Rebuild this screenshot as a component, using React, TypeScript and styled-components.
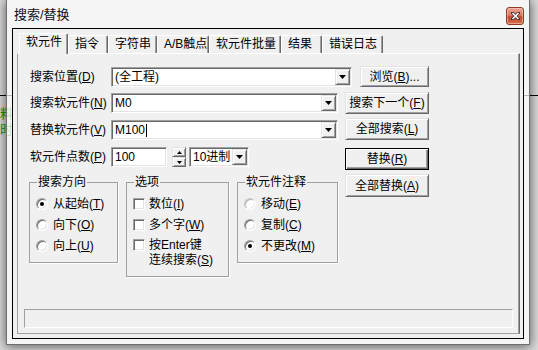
import React from "react";
import styled, { createGlobalStyle, css } from "styled-components";

const GlobalStyle = createGlobalStyle`
  html, body { margin: 0; padding: 0; }
  body {
    width: 538px; height: 350px; overflow: hidden;
    font-family: "Liberation Sans", "Noto Sans CJK SC", sans-serif;
    font-size: 12px; color: #000;
  }
`;

const Desktop = styled.div`
  position: relative;
  width: 538px;
  height: 350px;
  overflow: hidden;
  background: #dcdcdc;
`;

const BgRule = styled.div`
  position: absolute;
  left: 0; right: 0; top: 95px;
  height: 1px;
  background: #000;
`;

const BgGlyph = styled.div<{ $top: number }>`
  position: absolute;
  left: 0;
  top: ${(p) => p.$top}px;
  color: #0a9a0a;
  font-size: 13px;
  line-height: 15px;
`;

const Window = styled.div`
  position: absolute;
  left: 6px; top: 0;
  width: 524px; height: 345px;
  box-sizing: border-box;
  border: 1px solid #6e6e6e;
  border-top: none;
  background: rgba(255, 255, 255, 0.72);
  box-shadow: 0 1px 10px 1px rgba(0, 0, 0, 0.55);
  padding: 0 5px 5px;
  display: flex;
  flex-direction: column;
`;

const TitleBar = styled.div`
  height: 28px;
  flex: none;
  display: flex;
  align-items: flex-start;
`;

const Title = styled.div`
  padding: 8px 0 0 2px;
  font-size: 13px;
  line-height: 14px;
  color: #101018;
`;

const CloseButton = styled.div`
  margin-left: auto;
  margin-top: 7px;
  width: 18px;
  height: 18px;
  box-sizing: border-box;
  border: 1px solid #8e3a2a;
  border-radius: 3px;
  background: linear-gradient(#eba596 0%, #dc7a63 45%, #c5452c 55%, #d4704f 100%);
  box-shadow: inset 0 0 0 1px rgba(255, 210, 200, 0.5);
  display: flex;
  align-items: center;
  justify-content: center;
`;

const Client = styled.div`
  flex: 1;
  box-sizing: border-box;
  border: 1px solid #000;
  background: #f0f0f0;
  padding: 4px 3px 4px 4px;
  display: flex;
  flex-direction: column;
`;

const TabStrip = styled.div`
  height: 20px;
  flex: none;
  display: flex;
  align-items: flex-end;
  padding-left: 2px;
  position: relative;
  z-index: 1;
`;

const Tab = styled.div<{ $w: number; $active?: boolean }>`
  width: ${(p) => p.$w}px;
  height: ${(p) => (p.$active ? 21 : 18)}px;
  margin-bottom: ${(p) => (p.$active ? -1 : 0)}px;
  box-sizing: border-box;
  border: 1px solid;
  border-bottom: none;
  border-color: #fff #696969 transparent #fff;
  border-radius: 2px 2px 0 0;
  box-shadow: inset -1px 0 0 #a0a0a0;
  background: #f0f0f0;
  padding: 1px 0 0 6px;
  font-size: 12px;
  line-height: 14px;
  white-space: nowrap;
`;

const Panel = styled.div`
  flex: 1;
  box-sizing: border-box;
  border: 1px solid;
  border-color: #fff #696969 #a0a0a0 #a0a0a0;
  box-shadow: inset -1px 0 0 #a0a0a0;
  padding: 12px 6px 5px 6px;
  display: flex;
  flex-direction: column;
`;

const TopArea = styled.div`
  padding-left: 6px;
  display: flex;
  flex-direction: column;
`;

const Row = styled.div`
  height: 21px;
  display: flex;
  align-items: center;
`;

const FieldRow = styled.div`
  height: 22px;
  display: flex;
  align-items: center;
`;

const Label = styled.div`
  width: 81px;
  flex: none;
  line-height: 14px;
  white-space: nowrap;
`;

const Mn = styled.u`
  text-decoration: underline;
  text-underline-offset: 1px;
`;

const Field = styled.div<{ $w: number; $ml?: number }>`
  width: ${(p) => p.$w}px;
  height: 20px;
  margin-left: ${(p) => p.$ml ?? 0}px;
  flex: none;
  box-sizing: border-box;
  border: 1px solid;
  border-color: #a0a0a0 #fff #fff #a0a0a0;
  box-shadow: inset 1px 1px 0 #696969, inset -1px -1px 0 #e3e3e3;
  background: #fff;
  padding: 1px;
  display: flex;
  align-items: stretch;
`;

const FieldText = styled.div`
  flex: 1;
  padding-left: 2px;
  line-height: 16px;
  white-space: nowrap;
  display: flex;
  align-items: center;
`;

const Caret = styled.span`
  display: inline-block;
  width: 1px;
  height: 13px;
  background: #000;
  margin-left: 1px;
`;

const raised = css`
  box-sizing: border-box;
  border: 1px solid;
  border-color: #e3e3e3 #696969 #696969 #e3e3e3;
  box-shadow: inset 1px 1px 0 #fff, inset -1px -1px 0 #a0a0a0;
  background: #f0f0f0;
`;

const DropButton = styled.div`
  ${raised};
  width: 15px;
  flex: none;
  display: flex;
  align-items: center;
  justify-content: center;
`;

const Spin = styled.div`
  width: 14px;
  height: 20px;
  margin-left: 5px;
  flex: none;
  display: flex;
  flex-direction: column;
`;

const SpinButton = styled.div`
  ${raised};
  flex: 1;
  display: flex;
  align-items: center;
  justify-content: center;
`;

const Btn = styled.button<{ $w: number; $h?: number; $ml?: number; $mt?: number; $default?: boolean }>`
  ${raised};
  width: ${(p) => p.$w}px;
  height: ${(p) => p.$h ?? 22}px;
  margin: ${(p) => p.$mt ?? 0}px 0 0 ${(p) => p.$ml ?? 0}px;
  flex: none;
  padding: 0;
  font: inherit;
  font-size: 12px;
  line-height: 14px;
  color: #000;
  display: flex;
  align-items: center;
  justify-content: center;
  white-space: nowrap;
  ${(p) =>
    p.$default &&
    css`
      border-color: #000;
      box-shadow: inset 1px 1px 0 #fff, inset -1px -1px 0 #696969, inset -2px -2px 0 #a0a0a0;
    `}
`;

const Body = styled.div`
  margin-top: 5px;
  display: flex;
  align-items: flex-start;
`;

const LeftCol = styled.div`
  width: 315px;
  display: flex;
  flex-direction: column;
  gap: 5px;
`;

const RightCol = styled.div`
  width: 84px;
  display: flex;
  flex-direction: column;
`;

const Groups = styled.div`
  margin: 2px 0 0 -1px;
  display: flex;
  align-items: flex-start;
  gap: 8px;
`;

const Group = styled.fieldset<{ $w: number; $h: number }>`
  margin: 0;
  min-width: 0;
  width: ${(p) => p.$w}px;
  height: ${(p) => p.$h}px;
  box-sizing: border-box;
  border: 1px solid #a0a0a0;
  box-shadow: 1px 1px 0 #fff;
  padding: 0;
`;

const Legend = styled.legend`
  margin-left: 7px;
  padding: 0 1px;
  font-size: 12px;
  line-height: 14px;
`;

const Items = styled.div`
  padding: 4px 0 0 6px;
  display: flex;
  flex-direction: column;
`;

const Item = styled.div`
  height: 21px;
  display: flex;
  align-items: center;
  gap: 5px;
  line-height: 14px;
  white-space: nowrap;
`;

const CheckItem = styled.div<{ $multi?: boolean }>`
  min-height: 21px;
  display: flex;
  align-items: ${(p) => (p.$multi ? "flex-start" : "center")};
  padding-top: ${(p) => (p.$multi ? 3 : 0)}px;
  box-sizing: border-box;
  gap: 4px;
  line-height: ${(p) => (p.$multi ? 15 : 14)}px;
  white-space: nowrap;
`;

const Radio = styled.span<{ $checked?: boolean; $dim?: boolean }>`
  position: relative;
  width: 12px;
  height: 12px;
  flex: none;
  box-sizing: border-box;
  border-radius: 50%;
  border: 1px solid;
  border-color: ${(p) => (p.$dim ? "#c8c8c8 #fff #fff #c8c8c8" : "#a0a0a0 #fff #fff #a0a0a0")};
  box-shadow: ${(p) =>
    p.$dim
      ? "inset 1px 1px 0 #b4b4b4, inset -1px -1px 0 #ececec"
      : "inset 1px 1px 0 #696969, inset -1px -1px 0 #e3e3e3"};
  background: #fff;
  &::after {
    content: "";
    display: ${(p) => (p.$checked ? "block" : "none")};
    position: absolute;
    left: 3px; top: 3px;
    width: 4px; height: 4px;
    border-radius: 50%;
    background: #000;
  }
`;

const Check = styled.span<{ $mt?: number }>`
  width: 12px;
  height: 12px;
  margin-top: ${(p) => p.$mt ?? 0}px;
  flex: none;
  box-sizing: border-box;
  border: 1px solid;
  border-color: #a0a0a0 #fff #fff #a0a0a0;
  box-shadow: inset 1px 1px 0 #696969, inset -1px -1px 0 #e3e3e3;
  background: #fff;
`;

const Status = styled.div`
  margin-top: auto;
  height: 19px;
  box-sizing: border-box;
  border: 1px solid;
  border-color: #a0a0a0 #fff #fff #a0a0a0;
`;

const DownTri = () => (
  <svg width="7" height="4" viewBox="0 0 7 4">
    <polygon points="0,0 7,0 3.5,4" fill="#000" />
  </svg>
);

const SmallTri = ({ up }: { up?: boolean }) => (
  <svg width="5" height="3" viewBox="0 0 5 3">
    <polygon points={up ? "0,3 5,3 2.5,0" : "0,0 5,0 2.5,3"} fill="#000" />
  </svg>
);

const tabs = [
  { label: "软元件", w: 49 },
  { label: "指令", w: 40 },
  { label: "字符串", w: 49 },
  { label: "A/B触点", w: 52 },
  { label: "软元件批量", w: 72 },
  { label: "结果", w: 41 },
  { label: "错误日志", w: 61 },
];

export default function App() {
  return (
    <>
      <GlobalStyle />
      <Desktop>
        <BgRule />
        <BgGlyph $top={106}>料</BgGlyph>
        <BgGlyph $top={122}>时</BgGlyph>
        <Window>
          <TitleBar>
            <Title>搜索/替换</Title>
            <CloseButton>
              <svg width="9" height="8" viewBox="0 0 9 8">
                <path d="M1.5 1 L7.5 7 M7.5 1 L1.5 7" stroke="#3a2a2a" strokeWidth="3" strokeLinecap="square" />
                <path d="M1.5 1 L7.5 7 M7.5 1 L1.5 7" stroke="#fff" strokeWidth="1.6" />
              </svg>
            </CloseButton>
          </TitleBar>
          <Client>
            <TabStrip>
              {tabs.map((t, i) => (
                <Tab key={t.label} $w={t.w} $active={i === 0}>
                  {t.label}
                </Tab>
              ))}
            </TabStrip>
            <Panel>
              <TopArea>
                <Row>
                  <Label>
                    搜索位置(<Mn>D</Mn>)
                  </Label>
                  <Field $w={241}>
                    <FieldText>(全工程)</FieldText>
                    <DropButton>
                      <DownTri />
                    </DropButton>
                  </Field>
                  <Btn $w={69} $h={21} $ml={8}>
                    浏览(<Mn>B</Mn>)...
                  </Btn>
                </Row>
                <Body>
                  <LeftCol>
                    <FieldRow>
                      <Label>
                        搜索软元件(<Mn>N</Mn>)
                      </Label>
                      <Field $w={227}>
                        <FieldText>M0</FieldText>
                        <DropButton>
                          <DownTri />
                        </DropButton>
                      </Field>
                    </FieldRow>
                    <FieldRow>
                      <Label>
                        替换软元件(<Mn>V</Mn>)
                      </Label>
                      <Field $w={227}>
                        <FieldText>
                          M100
                          <Caret />
                        </FieldText>
                        <DropButton>
                          <DownTri />
                        </DropButton>
                      </Field>
                    </FieldRow>
                    <FieldRow>
                      <Label>
                        软元件点数(<Mn>P</Mn>)
                      </Label>
                      <Field $w={56}>
                        <FieldText>100</FieldText>
                      </Field>
                      <Spin>
                        <SpinButton>
                          <SmallTri up />
                        </SpinButton>
                        <SpinButton>
                          <SmallTri />
                        </SpinButton>
                      </Spin>
                      <Field $w={60} $ml={3}>
                        <FieldText>10进制</FieldText>
                        <DropButton>
                          <DownTri />
                        </DropButton>
                      </Field>
                    </FieldRow>
                    <Groups>
                      <Group $w={89} $h={88}>
                        <Legend>搜索方向</Legend>
                        <Items>
                          <Item>
                            <Radio $checked />
                            <span>从起始(<Mn>T</Mn>)</span>
                          </Item>
                          <Item>
                            <Radio />
                            <span>向下(<Mn>O</Mn>)</span>
                          </Item>
                          <Item>
                            <Radio />
                            <span>向上(<Mn>U</Mn>)</span>
                          </Item>
                        </Items>
                      </Group>
                      <Group $w={103} $h={102}>
                        <Legend>选项</Legend>
                        <Items>
                          <CheckItem>
                            <Check />
                            <span>数位(<Mn>I</Mn>)</span>
                          </CheckItem>
                          <CheckItem>
                            <Check />
                            <span>多个字(<Mn>W</Mn>)</span>
                          </CheckItem>
                          <CheckItem $multi>
                            <Check $mt={1} />
                            <span>
                              按Enter键
                              <br />
                              连续搜索(<Mn>S</Mn>)
                            </span>
                          </CheckItem>
                        </Items>
                      </Group>
                      <Group $w={101} $h={88}>
                        <Legend>软元件注释</Legend>
                        <Items>
                          <Item>
                            <Radio $dim />
                            <span>移动(<Mn>E</Mn>)</span>
                          </Item>
                          <Item>
                            <Radio />
                            <span>复制(<Mn>C</Mn>)</span>
                          </Item>
                          <Item>
                            <Radio $checked />
                            <span>不更改(<Mn>M</Mn>)</span>
                          </Item>
                        </Items>
                      </Group>
                    </Groups>
                  </LeftCol>
                  <RightCol>
                    <Btn $w={84}>
                      搜索下一个(<Mn>F</Mn>)
                    </Btn>
                    <Btn $w={84} $mt={4}>
                      全部搜索(<Mn>L</Mn>)
                    </Btn>
                    <Btn $w={84} $mt={8} $default>
                      替换(<Mn>R</Mn>)
                    </Btn>
                    <Btn $w={84} $h={23} $mt={4}>
                      全部替换(<Mn>A</Mn>)
                    </Btn>
                  </RightCol>
                </Body>
              </TopArea>
              <Status />
            </Panel>
          </Client>
        </Window>
      </Desktop>
    </>
  );
}
